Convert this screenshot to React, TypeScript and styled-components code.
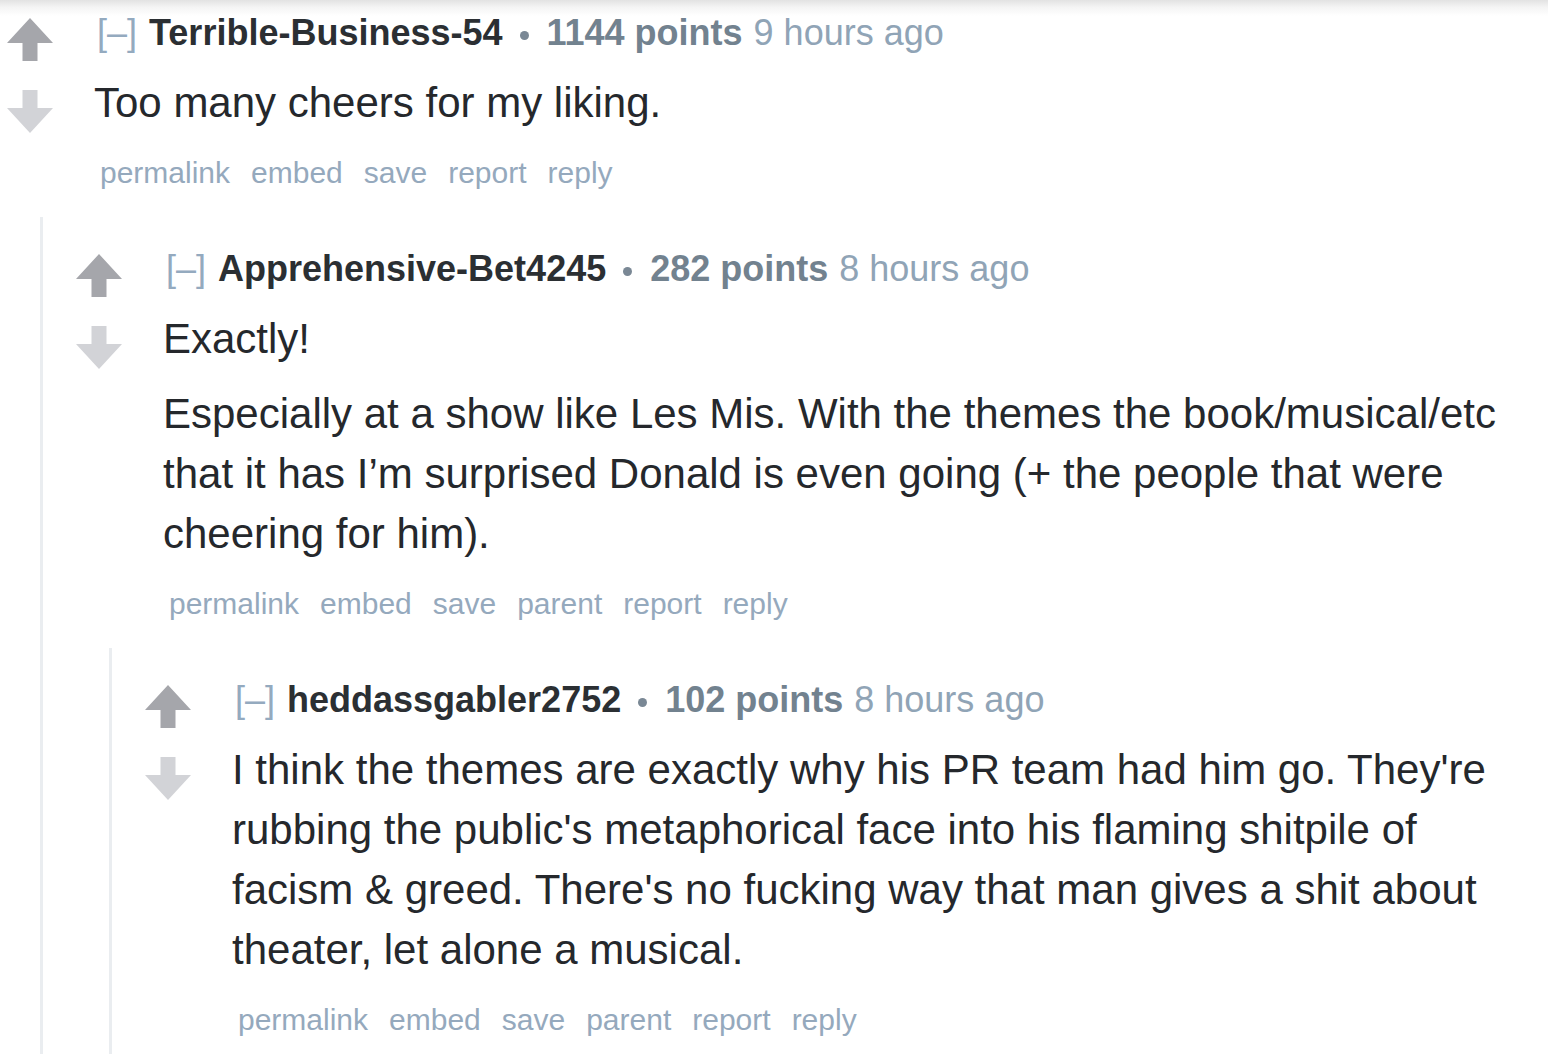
import React from "react";
import styled, { createGlobalStyle } from "styled-components";

const GlobalStyle = createGlobalStyle`
  html, body {
    margin: 0;
    padding: 0;
    background: #ffffff;
  }
  body {
    font-family: "Liberation Sans", Arial, sans-serif;
    overflow: hidden;
  }
`;

const Page = styled.div`
  min-height: 1054px;
  box-sizing: border-box;
  padding: 13px 26px 0 0;
  background: linear-gradient(to bottom, #e2e2e2 0px, #f4f4f4 7px, #ffffff 16px);
`;

const CommentBox = styled.div`
  display: flex;
  flex-direction: column;
`;

const Row = styled.div`
  display: flex;
  align-items: flex-start;
`;

const Midcol = styled.div`
  flex: 0 0 46px;
  margin-left: 7px;
  margin-top: 5px;
  display: flex;
  flex-direction: column;
  gap: 29px;
`;

const Entry = styled.div`
  flex: 1 1 auto;
  min-width: 0;
  margin-left: 41px;
  display: flex;
  flex-direction: column;
`;

const Tagline = styled.div`
  font-size: 36px;
  line-height: 40px;
  height: 40px;
  padding-left: 3px;
  white-space: nowrap;
  display: flex;
  align-items: center;
  color: #90a4b6;
`;

const Expand = styled.span`
  color: #94aabf;
  margin-right: 12px;
`;

const Author = styled.span`
  font-weight: bold;
  color: #2b2f33;
`;

const Dot = styled.span`
  display: inline-block;
  width: 9px;
  height: 9px;
  border-radius: 50%;
  background: #7a8895;
  margin: 5px 18px 0 17px;
`;

const Score = styled.span`
  font-weight: bold;
  color: #72828f;
  margin-right: 11px;
`;

const Time = styled.span`
  color: #90a4b6;
`;

const Body = styled.div`
  margin-top: 20px;
  font-size: 42px;
  line-height: 60px;
  color: #25282c;
`;

const Para = styled.p`
  margin: 0 0 15px 0;
  &:last-child {
    margin-bottom: 0;
  }
`;

const Links = styled.ul`
  list-style: none;
  margin: 20px 0 0 0;
  padding: 0 0 0 6px;
  display: flex;
  gap: 21px;
  font-size: 30px;
  line-height: 40px;
`;

const LinkItem = styled.li`
  color: #95a9bd;
`;

const ChildList = styled.div`
  margin: 24px 0 0 40px;
  border-left: 3px solid #eaedf0;
  padding: 32px 0 30px 26px;
  display: flex;
  flex-direction: column;
`;

const ArrowSvg = styled.svg`
  display: block;
  width: 46px;
  height: 43px;
`;

const Arrow: React.FC<{ down?: boolean }> = ({ down }) => (
  <ArrowSvg viewBox="0 0 46 43">
    <polygon
      points="23,0 46,25 30.5,25 30.5,43 15.5,43 15.5,25 0,25"
      fill={down ? "#d2d3d7" : "#a5a6ab"}
      transform={down ? "rotate(180 23 21.5)" : undefined}
    />
  </ArrowSvg>
);

type CommentData = {
  author: string;
  points: string;
  time: string;
  paragraphs: string[];
  links: string[];
  children?: CommentData[];
};

const Comment: React.FC<{ data: CommentData }> = ({ data }) => (
  <CommentBox>
    <Row>
      <Midcol>
        <Arrow />
        <Arrow down />
      </Midcol>
      <Entry>
        <Tagline>
          <Expand>[–]</Expand>
          <Author>{data.author}</Author>
          <Dot />
          <Score>{data.points}</Score>
          <Time>{data.time}</Time>
        </Tagline>
        <Body>
          {data.paragraphs.map((p, i) => (
            <Para key={i}>{p}</Para>
          ))}
        </Body>
        <Links>
          {data.links.map((l) => (
            <LinkItem key={l}>{l}</LinkItem>
          ))}
        </Links>
      </Entry>
    </Row>
    {data.children && data.children.length > 0 && (
      <ChildList>
        {data.children.map((c, i) => (
          <Comment key={i} data={c} />
        ))}
      </ChildList>
    )}
  </CommentBox>
);

const thread: CommentData = {
  author: "Terrible-Business-54",
  points: "1144 points",
  time: "9 hours ago",
  paragraphs: ["Too many cheers for my liking."],
  links: ["permalink", "embed", "save", "report", "reply"],
  children: [
    {
      author: "Apprehensive-Bet4245",
      points: "282 points",
      time: "8 hours ago",
      paragraphs: [
        "Exactly!",
        "Especially at a show like Les Mis. With the themes the book/musical/etc that it has I\u2019m surprised Donald is even going (+ the people that were cheering for him).",
      ],
      links: ["permalink", "embed", "save", "parent", "report", "reply"],
      children: [
        {
          author: "heddassgabler2752",
          points: "102 points",
          time: "8 hours ago",
          paragraphs: [
            "I think the themes are exactly why his PR team had him go. They're rubbing the public's metaphorical face into his flaming shitpile of facism & greed. There's no fucking way that man gives a shit about theater, let alone a musical.",
          ],
          links: ["permalink", "embed", "save", "parent", "report", "reply"],
        },
      ],
    },
  ],
};

export default function App() {
  return (
    <>
      <GlobalStyle />
      <Page>
        <Comment data={thread} />
      </Page>
    </>
  );
}
